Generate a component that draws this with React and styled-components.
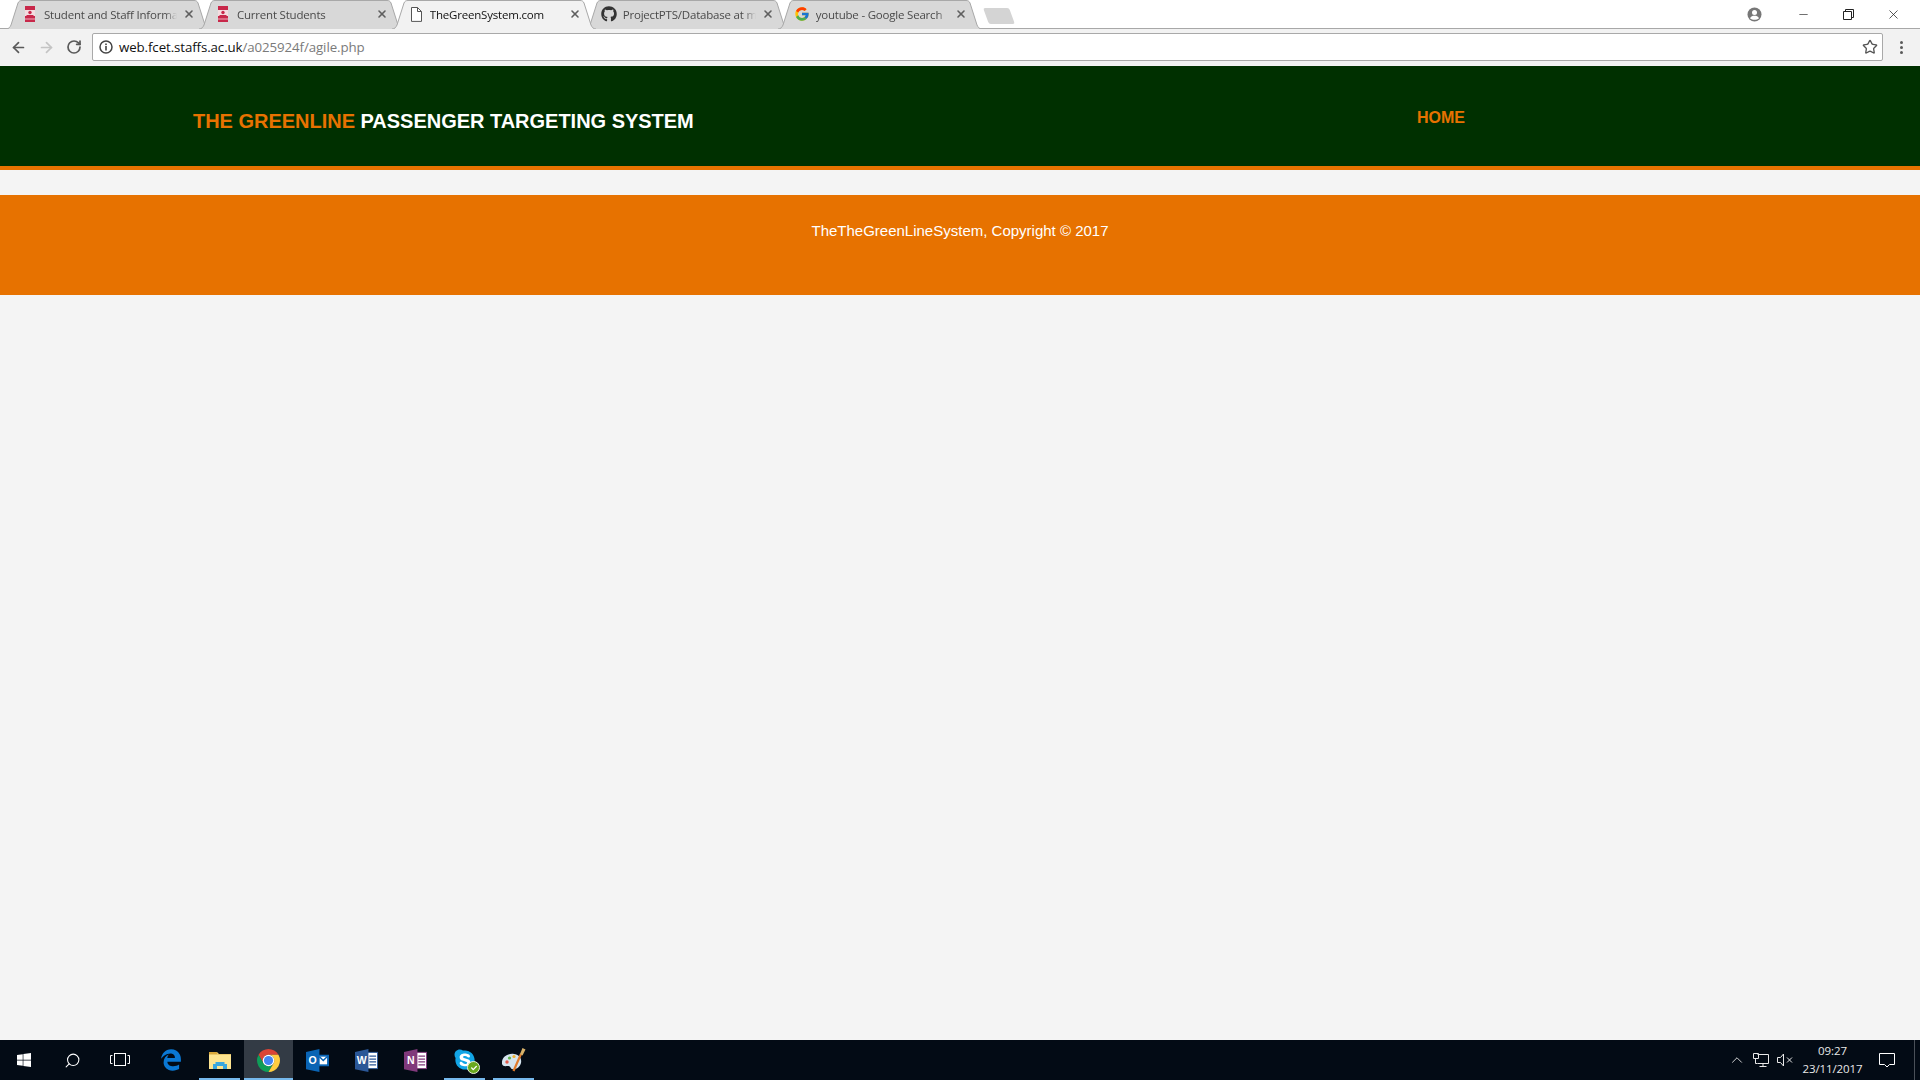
import React from 'react';
import styled, { createGlobalStyle } from 'styled-components';
import { ArrowLeft, ArrowRight, RotateCw, Star, X, Minus, Search, ChevronUp } from 'lucide-react';
import { FaWindows, FaGithub, FaSkype, FaCheck } from 'react-icons/fa';
import { FaEdgeLegacy } from 'react-icons/fa6';
import { FcGoogle } from 'react-icons/fc';

const GlobalStyle = createGlobalStyle`
  html, body {
    margin: 0;
    padding: 0;
    height: 100%;
    background: #f4f4f4;
    overflow: hidden;
  }
`;

const Screen = styled.div`
  display: flex;
  flex-direction: column;
  height: 1080px;
  font-family: "Liberation Sans", Arial, sans-serif;
`;

/* browser chrome */

const TabStrip = styled.div`
  display: flex;
  align-items: flex-end;
  height: 29px;
  padding-left: 6px;
  background: #fff;
  box-sizing: border-box;
  position: relative;
`;

const TabShape = styled.svg`
  position: absolute;
  inset: 0;
  width: 100%;
  height: 100%;
`;

const Tab = styled.div`
  position: relative;
  z-index: ${(p) => (p.$active ? 2 : 1)};
  display: flex;
  align-items: center;
  width: 204px;
  height: 29px;
  margin-right: -11.1px;
  padding: 0 14px 1px 16px;
  box-sizing: border-box;
  font: 11.5px "Open Sans", sans-serif;
  letter-spacing: -0.2px;
  color: ${(p) => (p.$active ? '#111' : '#4a4a4a')};
`;

const FavSlot = styled.span`
  position: relative;
  display: flex;
  align-items: center;
  justify-content: center;
  width: 16px;
  height: 16px;
  flex: none;
`;

const TabTitle = styled.span`
  position: relative;
  flex: 1;
  margin: 0 6px 0 6px;
  overflow: hidden;
  white-space: nowrap;
  -webkit-mask-image: linear-gradient(to right, #000 91%, transparent 100%);
  mask-image: linear-gradient(to right, #000 91%, transparent 100%);
`;

const TabClose = styled(X)`
  position: relative;
  flex: none;
  width: 12px;
  height: 12px;
  margin-right: 1px;
  color: #5f5f5f;
  stroke-width: 3.2;
`;

const NewTab = styled.div`
  width: 26px;
  height: 16px;
  margin: 0 0 5px 15px;
  border-radius: 2px;
  background: #d4d4d4;
  transform: skewX(20deg);
  align-self: flex-end;
`;

const WindowControls = styled.div`
  display: flex;
  align-items: center;
  margin-left: auto;
  margin-right: 3.7px;
  height: 28px;
  align-self: flex-start;
`;

const WinButton = styled.span`
  display: flex;
  align-items: center;
  justify-content: center;
  width: 45px;
  height: 26px;
  color: #222;

  &:first-child {
    margin-right: 4px;
  }
`;

const Toolbar = styled.div`
  display: flex;
  align-items: center;
  height: 37px;
  background: #f2f2f2;
  box-sizing: border-box;
  border-top: 1px solid #a8a8a8;
  margin-top: -1px;
  border-bottom: 0;
  position: relative;
`;

const NavIcons = styled.div`
  display: flex;
  width: 92px;
  padding-left: 4px;
  box-sizing: border-box;
  flex: none;
`;

const NavButton = styled.span`
  display: flex;
  justify-content: center;
  width: 28px;
  color: ${(p) => (p.$off ? '#c4c4c4' : '#5a5a5a')};
`;

const Omnibox = styled.div`
  display: flex;
  align-items: center;
  width: 1791px;
  height: 28px;
  padding: 0 4px 0 6px;
  box-sizing: border-box;
  background: #fff;
  border: 1px solid #a9a9a9;
  border-radius: 2px;
  flex: none;
`;

const Url = styled.span`
  flex: 1;
  margin-left: 6px;
  font: 13.3px "Open Sans", sans-serif;
  color: #111;
  letter-spacing: -0.1px;
`;

const UrlPath = styled.span`
  color: #7a7a7a;
`;

const MenuDots = styled.span`
  display: flex;
  flex-direction: column;
  gap: 2px;
  margin-left: 17px;
`;

const Dot = styled.i`
  width: 3px;
  height: 3px;
  border-radius: 50%;
  background: #5a5a5a;
`;

/* page */

const Header = styled.header`
  display: flex;
  justify-content: space-between;
  height: 100px;
  margin-top: 1px;
  padding: 0 455px 0 193px;
  background: #003000;
  border-bottom: 4px solid #e77200;
`;

const Brand = styled.h1`
  margin: 43px 0 0;
  font-size: 20px;
  line-height: 24px;
  font-weight: 700;
  letter-spacing: -0.02px;
  color: #fff;
`;

const BrandAccent = styled.span`
  color: #e77200;
`;

const NavLink = styled.a`
  margin-top: 42px;
  font-size: 16px;
  line-height: 20px;
  font-weight: 700;
  color: #e77200;
`;

const Footer = styled.footer`
  height: 100px;
  margin-top: 25px;
  padding-top: 25px;
  box-sizing: border-box;
  background: #e77200;
  color: #fff;
  font-size: 15px;
  line-height: 22px;
  text-align: center;
`;

const Main = styled.main`
  flex: 1;
  background: #f4f4f4;
`;

/* taskbar */

const Taskbar = styled.div`
  display: flex;
  align-items: stretch;
  height: 40px;
  background: #030b15;
  color: #fff;
`;

const TaskButton = styled.div`
  position: relative;
  display: flex;
  align-items: center;
  justify-content: center;
  width: 49px;
  background: ${(p) => (p.$focused ? '#333b45' : 'transparent')};

  &:first-child {
    width: 48.2px;
  }

  &::after {
    content: '';
    display: ${(p) => (p.$open ? 'block' : 'none')};
    position: absolute;
    bottom: 0;
    left: ${(p) => (p.$focused ? '0' : '4px')};
    right: ${(p) => (p.$focused ? '0' : '4px')};
    height: 2px;
    background: #76b9ed;
  }
`;

const Tray = styled.div`
  display: flex;
  align-items: center;
  margin-left: auto;
`;

const TrayIcon = styled.span`
  display: flex;
  justify-content: center;
  width: 24px;
  color: #e8e8e8;
`;

const Clock = styled.div`
  width: 72px;
  margin-right: 6px;
  font: 11.5px/18px "Open Sans", sans-serif;
  letter-spacing: -0.1px;
  text-align: center;
  color: #e8e8e8;
`;

const ShowDesktop = styled.span`
  width: 5px;
  margin-left: 15.5px;
  align-self: stretch;
  border-left: 1px solid #4a5058;
`;

const SkypeMark = styled.span`
  position: relative;
  display: flex;

  &::before {
    content: '';
    position: absolute;
    inset: 4px;
    border-radius: 50%;
    background: #fff;
  }

  svg {
    position: relative;
  }
`;

const SkypeBadge = styled.span`
  position: absolute;
  right: 9px;
  bottom: 6px;
  display: flex;
  align-items: center;
  justify-content: center;
  width: 11px;
  height: 11px;
  border-radius: 50%;
  background: #6aa81e;
  color: #fff;
  border: 1px solid #e8f0d8;
`;

const Crest = () => (
  <svg width="10" height="16" viewBox="0 0 10 16">
    <rect width="10" height="16" fill="#c8284a" />
    <rect y="4" width="10" height="6" fill="#f4dce0" />
    <circle cx="5" cy="6.500" r="1.700" fill="#c8284a" />
    <path d="M1.500 9.500h7" stroke="#c8284a" strokeWidth="1" />
    <rect y="12.500" width="10" height="1" fill="#f0b0bd" />
  </svg>
);

const DocIcon = () => (
  <svg width="12" height="15" viewBox="0 0 12 15" fill="#fff" stroke="#555" strokeWidth="1">
    <path d="M1.500.5h6l4 4v9.900h-10z" />
    <path d="M7.500.5v4h4" fill="none" />
  </svg>
);

const tabs = [
  { title: 'Student and Staff Information', icon: <Crest /> },
  { title: 'Current Students', icon: <Crest /> },
  { title: 'TheGreenSystem.com', icon: <DocIcon />, active: true },
  { title: 'ProjectPTS/Database at master', icon: <FaGithub size={16} color="#333" /> },
  { title: 'youtube - Google Search', icon: <FcGoogle size={16} /> },
];

const AccountIcon = () => (
  <svg width="15" height="15" viewBox="0 0 15 15">
    <circle cx="7.500" cy="7.500" r="7" fill="#777" />
    <circle cx="7.500" cy="5.500" r="2.500" fill="#fff" />
    <path d="M3 11.200c1-2 2.500-2.500 4.500-2.500s3.500.5 4.500 2.500c-2.500 2-6.500 2-9 0z" fill="#fff" />
  </svg>
);

const RestoreIcon = () => (
  <svg width="11" height="11" viewBox="0 0 11 11" fill="none" stroke="#222" strokeWidth="1">
    <path d="M.5 2.500h8v8h-8zM2.500 2.500v-2h8v8h-2" />
  </svg>
);

const InfoIcon = () => (
  <svg width="14" height="14" viewBox="0 0 14 14" fill="none">
    <circle cx="7" cy="7" r="6" stroke="#444" strokeWidth="1.500" />
    <rect x="6.200" y="6" width="1.600" height="4.500" fill="#444" />
    <rect x="6.200" y="3.500" width="1.600" height="1.600" fill="#444" />
  </svg>
);

const TaskViewGlyph = styled.svg`
  margin-right: 3px;
`;

const TaskViewIcon = () => (
  <TaskViewGlyph width="20" height="16" viewBox="0 0 20 16" fill="none" stroke="#fff" strokeWidth="1">
    <rect x="4.500" y="1.500" width="11" height="12" />
    <path d="M2.500 3.500H.5v8h2M17.500 3.500h2v8h-2" />
  </TaskViewGlyph>
);

const FolderIcon = () => (
  <svg width="22" height="20" viewBox="0 0 22 20">
    <path d="M0 2h8l2 2h12v15H0z" fill="#e9c76a" />
    <rect x="0" y="5" width="22" height="14" fill="#fde490" />
    <rect x="0" y="2" width="8" height="2" fill="#d9a83a" />
    <path d="M4 19v-5h2.500v-2h9v2H18v5h-4v-3H8v3z" fill="#3aa6dd" />
  </svg>
);

const ChromeIcon = () => (
  <svg width="23" height="23" viewBox="2 2 20 20">
    <path d="M3.340 7A10 10 0 0 1 20.660 7L12 7A5 5 0 0 0 7.670 14.500Z" fill="#db4437" />
    <path d="M3.340 7A10 10 0 0 0 12 22L16.330 14.500A5 5 0 0 1 7.670 14.500Z" fill="#0f9d58" />
    <path d="M12 22A10 10 0 0 0 20.660 7L12 7A5 5 0 0 1 16.330 14.500Z" fill="#ffcd40" />
    <circle cx="12" cy="12" r="5" fill="#fff" />
    <circle cx="12" cy="12" r="4" fill="#4285f4" />
  </svg>
);

const OfficeIcon = ({ letter, color, lines }) => (
  <svg width="23" height="23" viewBox="0 0 24 24">
    {lines ? (
      <>
        <rect x="10" y="3.500" width="13.500" height="17" fill="#fff" stroke={color} />
        <path d="M15 7.500h7M15 10.500h7M15 13.500h7M15 16.500h7" stroke={color} strokeWidth="1.400" />
      </>
    ) : (
      <>
        <rect x="10" y="6" width="14" height="12" fill={color} />
        <path d="M14 8h8v8h-8z" fill="#fff" />
        <path d="M14 8l4 4 4-4" stroke={color} fill="none" strokeWidth="1.500" />
      </>
    )}
    <path d="M0 3l14-3v24L0 21z" fill={color} />
    <text x="7" y="16" textAnchor="middle" fontFamily="Liberation Sans, sans-serif" fontWeight="700" fontSize="11" fill="#fff">
      {letter}
    </text>
  </svg>
);

const PaintIcon = () => (
  <svg width="24" height="24" viewBox="0 0 24 24">
    <path d="M0 16C-1 10 5 5 12 6c5 .5 8 4 7 9-1 4-5 7-9 6-2-.5-1-3-4-3-2 0-5 1-6-2z" fill="#d5e4ee" />
    <circle cx="5" cy="14" r="1.700" fill="#e25a4a" />
    <circle cx="7.500" cy="10" r="1.600" fill="#62b34a" />
    <circle cx="12" cy="8.500" r="1.600" fill="#f0b030" />
    <path d="M11.500 23L19 6" stroke="#e07a2a" strokeWidth="2.200" />
    <path d="M18 6l2.500-6 3 1.500-3 6z" fill="#d8b26a" />
  </svg>
);

const NetworkIcon = () => (
  <svg width="16" height="14" viewBox="0 0 16 14" fill="none" stroke="#e8e8e8" strokeWidth="1">
    <path d="M4.500 1.500h11v9h-11M.5 .5h5v5h-5zM2.500 5.500v5h2M10 10.500v3M6.500 13.500h7" />
  </svg>
);

const SpeakerMutedIcon = () => (
  <svg width="16" height="14" viewBox="0 0 16 14" fill="none" stroke="#e8e8e8" strokeWidth="1">
    <path d="M.5 4.500h3l3-3.500v12l-3-3.500h-3zM10 4.500l5 5M15 4.500l-5 5" />
  </svg>
);

const NoticeIcon = () => (
  <svg width="16" height="15" viewBox="0 0 16 15" fill="none" stroke="#fff" strokeWidth="1">
    <path d="M.5.500h15v11h-5l-2.500 2.500-2.500-2.500h-5z" />
  </svg>
);

const MagnifierIcon = styled(Search)`
  transform: scaleX(-1);
`;

export default function App() {
  return (
    <Screen>
      <GlobalStyle />
      <TabStrip>
        {tabs.map((tab) => (
          <Tab key={tab.title} $active={tab.active}>
            <TabShape viewBox="0 0 204 29" preserveAspectRatio="none">
              <path
                d="M0 29C3 29 4 27 5 25L12 3C13 1 14 .5 16 .5L188 .5C190 .5 191 1 192 3L199 25C200 27 201 29 204 29"
                fill={tab.active ? '#f2f2f2' : '#d8d8d8'}
                stroke="#a8a8a8"
              />
            </TabShape>
            <FavSlot>{tab.icon}</FavSlot>
            <TabTitle>{tab.title}</TabTitle>
            <TabClose />
          </Tab>
        ))}
        <NewTab />
        <WindowControls>
          <WinButton>
            <AccountIcon />
          </WinButton>
          <WinButton>
            <Minus size={13} strokeWidth={1.2} />
          </WinButton>
          <WinButton>
            <RestoreIcon />
          </WinButton>
          <WinButton>
            <X size={15} strokeWidth={1.2} />
          </WinButton>
        </WindowControls>
      </TabStrip>

      <Toolbar>
        <NavIcons>
          <NavButton>
            <ArrowLeft size={17} strokeWidth={2.4} />
          </NavButton>
          <NavButton $off>
            <ArrowRight size={17} strokeWidth={2.4} />
          </NavButton>
          <NavButton>
            <RotateCw size={16} strokeWidth={2.6} />
          </NavButton>
        </NavIcons>
        <Omnibox>
          <InfoIcon />
          <Url>
            web.fcet.staffs.ac.uk<UrlPath>/a025924f/agile.php</UrlPath>
          </Url>
          <Star size={16} color="#555" strokeWidth={2} />
        </Omnibox>
        <MenuDots>
          <Dot />
          <Dot />
          <Dot />
        </MenuDots>
      </Toolbar>

      <Header>
        <Brand>
          <BrandAccent>THE GREENLINE</BrandAccent> PASSENGER TARGETING SYSTEM
        </Brand>
        <NavLink>HOME</NavLink>
      </Header>

      <Footer>TheTheGreenLineSystem, Copyright © 2017</Footer>

      <Main />

      <Taskbar>
        <TaskButton>
          <FaWindows size={16} color="#fff" />
        </TaskButton>
        <TaskButton>
          <MagnifierIcon size={17} color="#fff" strokeWidth={1.5} />
        </TaskButton>
        <TaskButton>
          <TaskViewIcon />
        </TaskButton>
        <TaskButton>
          <FaEdgeLegacy size={22} color="#0a78d4" />
        </TaskButton>
        <TaskButton $open>
          <FolderIcon />
        </TaskButton>
        <TaskButton $open $focused>
          <ChromeIcon />
        </TaskButton>
        <TaskButton>
          <OfficeIcon letter="O" color="#0a64b4" />
        </TaskButton>
        <TaskButton>
          <OfficeIcon letter="W" color="#2b5797" lines />
        </TaskButton>
        <TaskButton>
          <OfficeIcon letter="N" color="#80397b" lines />
        </TaskButton>
        <TaskButton $open>
          <SkypeMark>
            <FaSkype size={24} color="#12a5e6" />
          </SkypeMark>
          <SkypeBadge>
            <FaCheck size={6} />
          </SkypeBadge>
        </TaskButton>
        <TaskButton $open>
          <PaintIcon />
        </TaskButton>
        <Tray>
          <TrayIcon>
            <ChevronUp size={18} strokeWidth={1.2} />
          </TrayIcon>
          <TrayIcon>
            <NetworkIcon />
          </TrayIcon>
          <TrayIcon>
            <SpeakerMutedIcon />
          </TrayIcon>
          <Clock>
            09:27
            <br />
            23/11/2017
          </Clock>
          <TrayIcon>
            <NoticeIcon />
          </TrayIcon>
          <ShowDesktop />
        </Tray>
      </Taskbar>
    </Screen>
  );
}
